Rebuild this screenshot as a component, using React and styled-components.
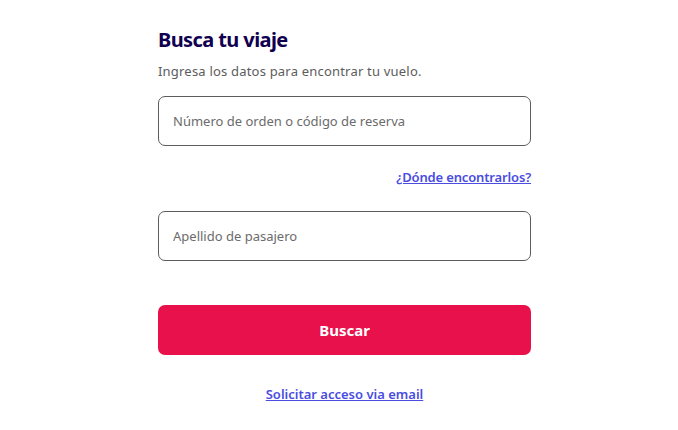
import React from "react";
import styled, { createGlobalStyle } from "styled-components";

const Global = createGlobalStyle`
  html, body { margin: 0; padding: 0; background: #ffffff; }
  body { font-family: "Noto Sans", "Open Sans", sans-serif; }
  * { box-sizing: border-box; }
`;

const Page = styled.main`
  padding: 26px 0 0 158px;
`;

const Form = styled.form`
  width: 373px;
  display: flex;
  flex-direction: column;
`;

const Title = styled.h1`
  margin: 0;
  font-size: 20px;
  line-height: 28px;
  font-weight: 700;
  color: #10004f;
  letter-spacing: -0.6px;
`;

const Subtitle = styled.p`
  margin: 8px 0 0;
  font-size: 13px;
  line-height: 18px;
  color: #5c5c5c;
  letter-spacing: 0.2px;
`;

const Field = styled.input`
  height: 50px;
  width: 100%;
  border: 1px solid #5c5c5c;
  border-radius: 7px;
  padding: 0 14px;
  font-family: inherit;
  font-size: 13px;
  color: #303030;
  background: #fff;
  margin-top: ${(p) => p.$top}px;
  outline: none;
  &::placeholder { color: #6b6b6b; }
`;

const HelpRow = styled.div`
  display: flex;
  justify-content: flex-end;
  margin-top: 22px;
`;

const Link = styled.a`
  font-size: 13px;
  line-height: 18px;
  font-weight: 600;
  color: #4a4de0;
  text-decoration: underline;
  letter-spacing: ${(p) => (p.$tight ? "-0.15px" : "0")};
  cursor: pointer;
`;

const Button = styled.button`
  margin-top: 44px;
  height: 50px;
  width: 100%;
  border: none;
  border-radius: 7px;
  background: #e8114b;
  color: #fff;
  font-family: inherit;
  font-size: 15px;
  font-weight: 700;
  cursor: pointer;
`;

const Footer = styled.div`
  display: flex;
  justify-content: center;
  margin-top: 30px;
`;

export default function App() {
  return (
    <>
      <Global />
      <Page>
        <Form onSubmit={(e) => e.preventDefault()}>
          <Title>Busca tu viaje</Title>
          <Subtitle>Ingresa los datos para encontrar tu vuelo.</Subtitle>
          <Field $top={16} placeholder="Número de orden o código de reserva" />
          <HelpRow>
            <Link $tight>¿Dónde encontrarlos?</Link>
          </HelpRow>
          <Field $top={25} placeholder="Apellido de pasajero" />
          <Button type="submit">Buscar</Button>
          <Footer>
            <Link>Solicitar acceso via email</Link>
          </Footer>
        </Form>
      </Page>
    </>
  );
}
